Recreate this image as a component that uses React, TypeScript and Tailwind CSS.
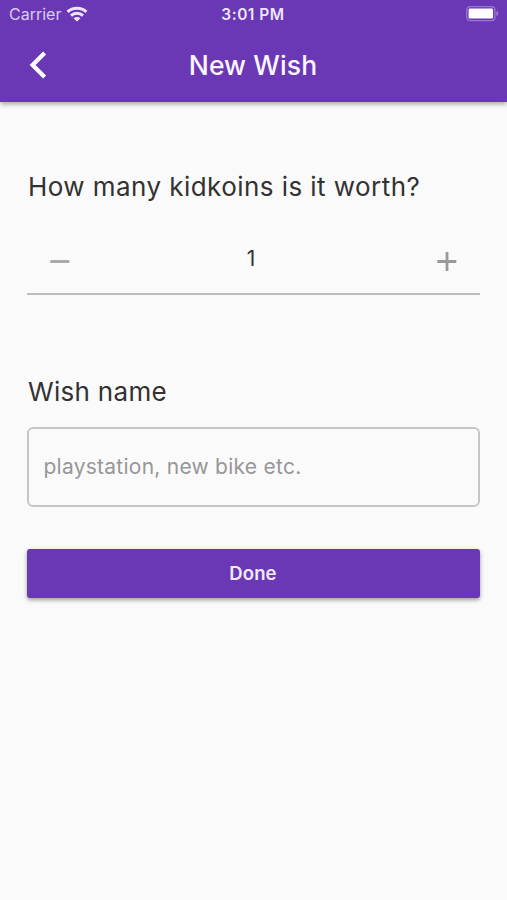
import { useState } from 'react'

function WifiIcon() {
  return (
    <svg width="22" height="16" viewBox="0 0 22 16" fill="none" stroke="#efe4fb" strokeWidth="3">
      <path d="M1.6 5.8C6.8 1 15.2 1 20.4 5.8" />
      <path d="M5 9.6C8.4 6.5 13.6 6.5 17 9.6" />
      <path d="M11 15.6 7.5 12.3C9.4 10.7 12.6 10.7 14.5 12.3Z" fill="#efe4fb" stroke="none" />
    </svg>
  )
}

function BatteryIcon() {
  return (
    <svg width="34" height="16" viewBox="0 0 34 16" fill="none">
      <rect x="0.7" y="0.6" width="28.2" height="14" rx="3.4" stroke="#9a78d2" strokeWidth="1.3" />
      <rect x="2.6" y="2.6" width="24.4" height="10" rx="1.4" fill="#fff" />
      <path d="M30.4 5.1C33 5.7 33 9.5 30.4 10.1Z" fill="#9a78d2" />
    </svg>
  )
}

export default function App() {
  const [coins, setCoins] = useState(1)
  const [name, setName] = useState('')

  return (
    <div className="flex h-[900px] w-[507px] flex-col bg-[#fafafa] font-['Inter','Liberation_Sans',sans-serif] text-[#323232]">
      {/* Header */}
      <header className="h-[102px] shrink-0 bg-[#6a38b5] shadow-[0_2px_5px_rgba(0,0,0,0.35)]">
        <div className="grid h-7 grid-cols-3 items-center pl-[9px] pr-[7px] text-[#efe4fb]">
          <div className="flex items-center gap-[5px]">
            <span className="text-[16px] leading-6 text-[#dccbf2]">Carrier</span>
            <WifiIcon />
          </div>
          <span className="-ml-[3px] pt-px text-center text-[15.5px] font-semibold tracking-[0.5px]">3:01 PM</span>
          <div className="flex justify-end">
            <BatteryIcon />
          </div>
        </div>
        <div className="grid h-[74px] grid-cols-[100px_1fr_100px] items-center">
          <button aria-label="Back" className="ml-[27px] w-6">
            <svg width="24" height="32" viewBox="0 0 24 32" fill="none" stroke="#fff" strokeWidth="4.2">
              <path d="M17.6 4 5.6 16 17.6 28" />
            </svg>
          </button>
          <h1 className="-ml-px pt-[2px] text-center text-[26.5px] font-medium tracking-[0.1px] text-[#faf5ff]">New Wish</h1>
        </div>
      </header>

      <main className="flex flex-col px-[27px] pt-[67px]">
        <h2 className="h-9 whitespace-nowrap pl-px text-[26px] leading-9 tracking-[0.44px]">How many kidkoins is it worth?</h2>

        {/* Amount stepper */}
        <div className="mt-[23px] flex h-[67px] items-center justify-between border-b-2 border-[#bdbdbd] px-[22px]">
          <button aria-label="Decrease" onClick={() => setCoins(c => Math.max(1, c - 1))}>
            <svg width="22" height="22" viewBox="0 0 22 22" stroke="#a5a5a5" strokeWidth="2.8">
              <path d="M1.3 11.5H20.3" />
            </svg>
          </button>
          <span className="-mt-[3px] pr-[5px] text-[21px]">{coins}</span>
          <button aria-label="Increase" onClick={() => setCoins(c => c + 1)}>
            <svg width="22" height="22" viewBox="0 0 22 22" stroke="#999999" strokeWidth="2.8">
              <path d="M1.3 11.5H20.3M11 2V21" />
            </svg>
          </button>
        </div>

        <label htmlFor="wish" className="mt-[79px] h-9 pl-px text-[26px] leading-9 tracking-[0.3px]">Wish name</label>
        <input
          id="wish"
          value={name}
          onChange={e => setName(e.target.value)}
          placeholder="playstation, new bike etc."
          className="mt-[17px] h-20 rounded-md border-2 border-[#c6c6c6] pb-px pl-[14.5px] pr-[15px] text-[21px] tracking-[0.25px] outline-none placeholder:text-[#979797]"
        />
        <button className="mt-[42px] h-[49px] rounded-[3px] bg-[#6a38b5] pr-px text-[18.5px] font-semibold tracking-[0.1px] text-[#f3e9fd] shadow-[0_2px_4px_rgba(0,0,0,0.38)]">
          Done
        </button>
      </main>
    </div>
  )
}
